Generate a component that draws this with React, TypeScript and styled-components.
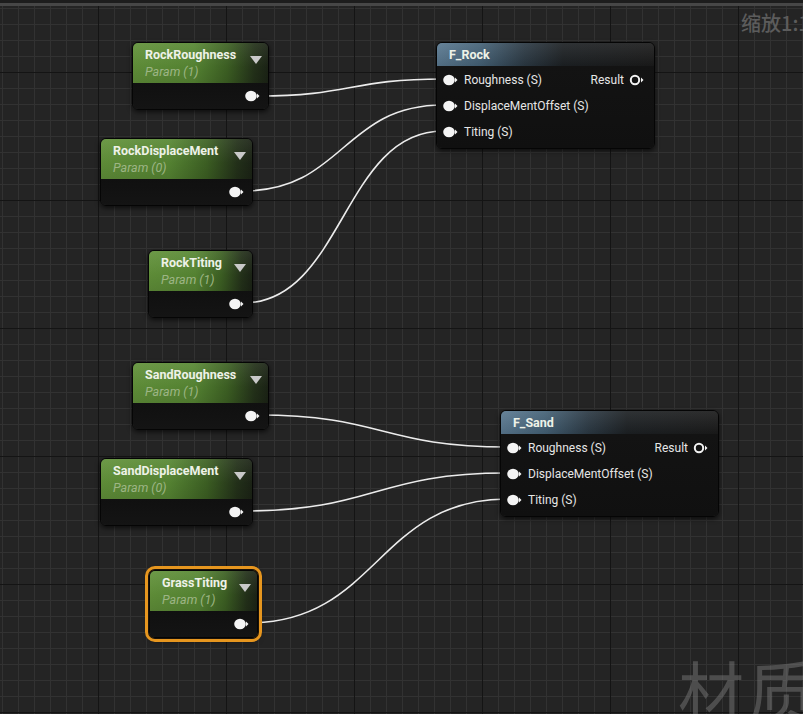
import React from 'react';
import styled, { createGlobalStyle, css } from 'styled-components';

const TOP = 6;

const GlobalStyle = createGlobalStyle`
	html, body {
		margin: 0;
		padding: 0;
		background: #242424;
		overflow: hidden;
	}
	body {
		font-family: Roboto, "Noto Sans CJK SC", sans-serif;
	}
`;

const Root = styled.div`
	width: 803px;
	height: 714px;
	display: flex;
	flex-direction: column;
	overflow: hidden;
`;

const TopBar = styled.div`
	height: 3px;
	flex-shrink: 0;
	background: #1d1d1d;
	border-bottom: 3px solid #474747;
`;

const Canvas = styled.div`
	position: relative;
	flex: 1;
	overflow: hidden;
	background-color: #242424;
	background-image:
		linear-gradient(to right, #141414 1px, transparent 1px),
		linear-gradient(to bottom, #141414 1px, transparent 1px),
		linear-gradient(to right, #323232 1px, transparent 1px),
		linear-gradient(to bottom, #323232 1px, transparent 1px);
	background-size: 128px 128px, 128px 128px, 16px 16px, 16px 16px;
	background-position: 98px ${72 - TOP}px, 98px ${72 - TOP}px, 2px ${8 - TOP}px, 2px ${8 - TOP}px;
`;

const Wires = styled.svg`
	position: absolute;
	left: 0;
	top: 0;
	width: 803px;
	height: ${714 - TOP}px;
	pointer-events: none;
`;

const ZoomLabel = styled.div`
	position: absolute;
	top: ${8 - TOP}px;
	left: 741px;
	font-size: 20px;
	font-weight: 500;
	color: #5c5c5c;
	white-space: nowrap;
	font-family: "Noto Sans CJK SC", Roboto, sans-serif;
`;

const Watermark = styled.div`
	position: absolute;
	top: ${640 - TOP}px;
	left: 678px;
	font-size: 66px;
	color: rgba(128, 128, 128, 0.45);
	white-space: nowrap;
	letter-spacing: 4px;
	font-family: "Noto Sans CJK SC", sans-serif;
`;

const NodeBox = styled.div<{ $selected?: boolean }>`
	position: absolute;
	display: flex;
	flex-direction: column;
	border: 1px solid #050505;
	border-radius: 6px;
	overflow: hidden;
	box-shadow: 0 2px 5px rgba(0, 0, 0, 0.65);
	${p => p.$selected && css`
		box-shadow: 0 0 0 1px #1a1208, 0 0 0 4px #e6961f, 0 2px 6px rgba(0, 0, 0, 0.6);
	`}
`;

const ParamHeader = styled.div`
	height: 40px;
	position: relative;
	padding: 4px 0 0 12px;
	box-sizing: border-box;
	background:
		linear-gradient(to bottom, rgba(255, 255, 255, 0.07), rgba(0, 0, 0, 0.05) 60%, rgba(0, 0, 0, 0.12)),
		linear-gradient(to right, #62923a 0%, #588834 45%, #3e6224 70%, #24321a 90%, #1c2416 100%);
`;

const Title = styled.div`
	font-size: 12.5px;
	font-weight: 700;
	line-height: 16px;
	color: #eef2e8;
	white-space: nowrap;
`;

const ParamLabel = styled.div`
	font-size: 12.5px;
	font-style: italic;
	line-height: 17px;
	color: #9db585;
	white-space: nowrap;
`;

const Dropdown = styled.div`
	position: absolute;
	right: 6px;
	top: 13px;
	width: 0;
	height: 0;
	border-left: 6px solid transparent;
	border-right: 6px solid transparent;
	border-top: 8px solid #c9c9c9;
`;

const ParamBody = styled.div`
	height: 26px;
	display: flex;
	align-items: center;
	justify-content: flex-end;
	padding-right: 7px;
	background: linear-gradient(to bottom, #101010, #141414);
`;

const FuncHeader = styled.div`
	height: 23px;
	display: flex;
	align-items: center;
	padding-left: 12px;
	background:
		linear-gradient(to bottom, rgba(255, 255, 255, 0.08), rgba(0, 0, 0, 0.1)),
		linear-gradient(to right, #5a7991 0%, #456277 20%, #2c3a45 40%, #1d2124 58%, #1b1b1b 100%);
`;

const FuncBody = styled.div`
	padding: 1px 9px 3px 6px;
	display: flex;
	flex-direction: column;
	background: linear-gradient(to bottom, #131313, #101010);
`;

const Row = styled.div`
	height: 26px;
	display: flex;
	align-items: center;
	justify-content: space-between;
`;

const PinLabel = styled.div`
	display: flex;
	align-items: center;
	gap: 5px;
	font-size: 12px;
	color: #e6e6e6;
	white-space: nowrap;
`;

const Pin: React.FC<{ hollow?: boolean }> = ({ hollow }) => (
	<svg width="16" height="12" viewBox="0 0 16 12">
		{hollow
			? <circle cx="6" cy="6" r="4.2" fill="none" stroke="#f2f2f2" strokeWidth="2" />
			: <ellipse cx="6" cy="6" rx="5.8" ry="5.2" fill="#f4f4f4" />}
		<polygon points="12,3.5 14.5,6 12,8.5" fill="#f4f4f4" />
	</svg>
);

type ParamNodeProps = {
	title: string,
	param: string,
	x: number,
	y: number,
	w: number,
	selected?: boolean,
};

const ParamNode: React.FC<ParamNodeProps> = ({ title, param, x, y, w, selected }) => (
	<NodeBox $selected={selected} style={{ left: x, top: y - TOP, width: w }}>
		<ParamHeader>
			<Title>{title}</Title>
			<ParamLabel>{param}</ParamLabel>
			<Dropdown />
		</ParamHeader>
		<ParamBody>
			<Pin />
		</ParamBody>
	</NodeBox>
);

type FuncNodeProps = {
	title: string,
	x: number,
	y: number,
};

const FuncNode: React.FC<FuncNodeProps> = ({ title, x, y }) => (
	<NodeBox style={{ left: x, top: y - TOP, width: 217 }}>
		<FuncHeader>
			<Title>{title}</Title>
		</FuncHeader>
		<FuncBody>
			<Row>
				<PinLabel><Pin />Roughness (S)</PinLabel>
				<PinLabel>Result<Pin hollow /></PinLabel>
			</Row>
			<Row>
				<PinLabel><Pin />DisplaceMentOffset (S)</PinLabel>
			</Row>
			<Row>
				<PinLabel><Pin />Titing (S)</PinLabel>
			</Row>
		</FuncBody>
	</NodeBox>
);

const params: ParamNodeProps[] = [
	{ title: 'RockRoughness', param: 'Param (1)', x: 132, y: 42, w: 135 },
	{ title: 'RockDisplaceMent', param: 'Param (0)', x: 100, y: 138, w: 151 },
	{ title: 'RockTiting', param: 'Param (1)', x: 148, y: 250, w: 103 },
	{ title: 'SandRoughness', param: 'Param (1)', x: 132, y: 362, w: 135 },
	{ title: 'SandDisplaceMent', param: 'Param (0)', x: 100, y: 458, w: 151 },
	{ title: 'GrassTiting', param: 'Param (1)', x: 149, y: 570, w: 107, selected: true },
];

const wires: [number, number, number, number][] = [
	[258, 96, 443, 79],
	[243, 191, 443, 105],
	[243, 303, 443, 131],
	[258, 415, 507, 447],
	[243, 511, 507, 473],
	[248, 623, 507, 499],
];

function wirePath([x1, y1, x2, y2]: [number, number, number, number]) {
	const k = Math.max(60, (x2 - x1) * 0.5);
	return `M${x1},${y1 - TOP} C${x1 + k},${y1 - TOP} ${x2 - k},${y2 - TOP} ${x2},${y2 - TOP}`;
}

export default function App() {
	return (
		<Root>
			<GlobalStyle />
			<TopBar />
			<Canvas>
				<Wires>
					{wires.map((w, i) => (
						<path key={i} d={wirePath(w)} fill="none" stroke="#ececec" strokeWidth="1.6" />
					))}
				</Wires>
				{params.map(p => <ParamNode key={p.title} {...p} />)}
				<FuncNode title="F_Rock" x={436} y={42} />
				<FuncNode title="F_Sand" x={500} y={410} />
				<ZoomLabel>缩放1:1</ZoomLabel>
				<Watermark>材质</Watermark>
			</Canvas>
		</Root>
	);
}
